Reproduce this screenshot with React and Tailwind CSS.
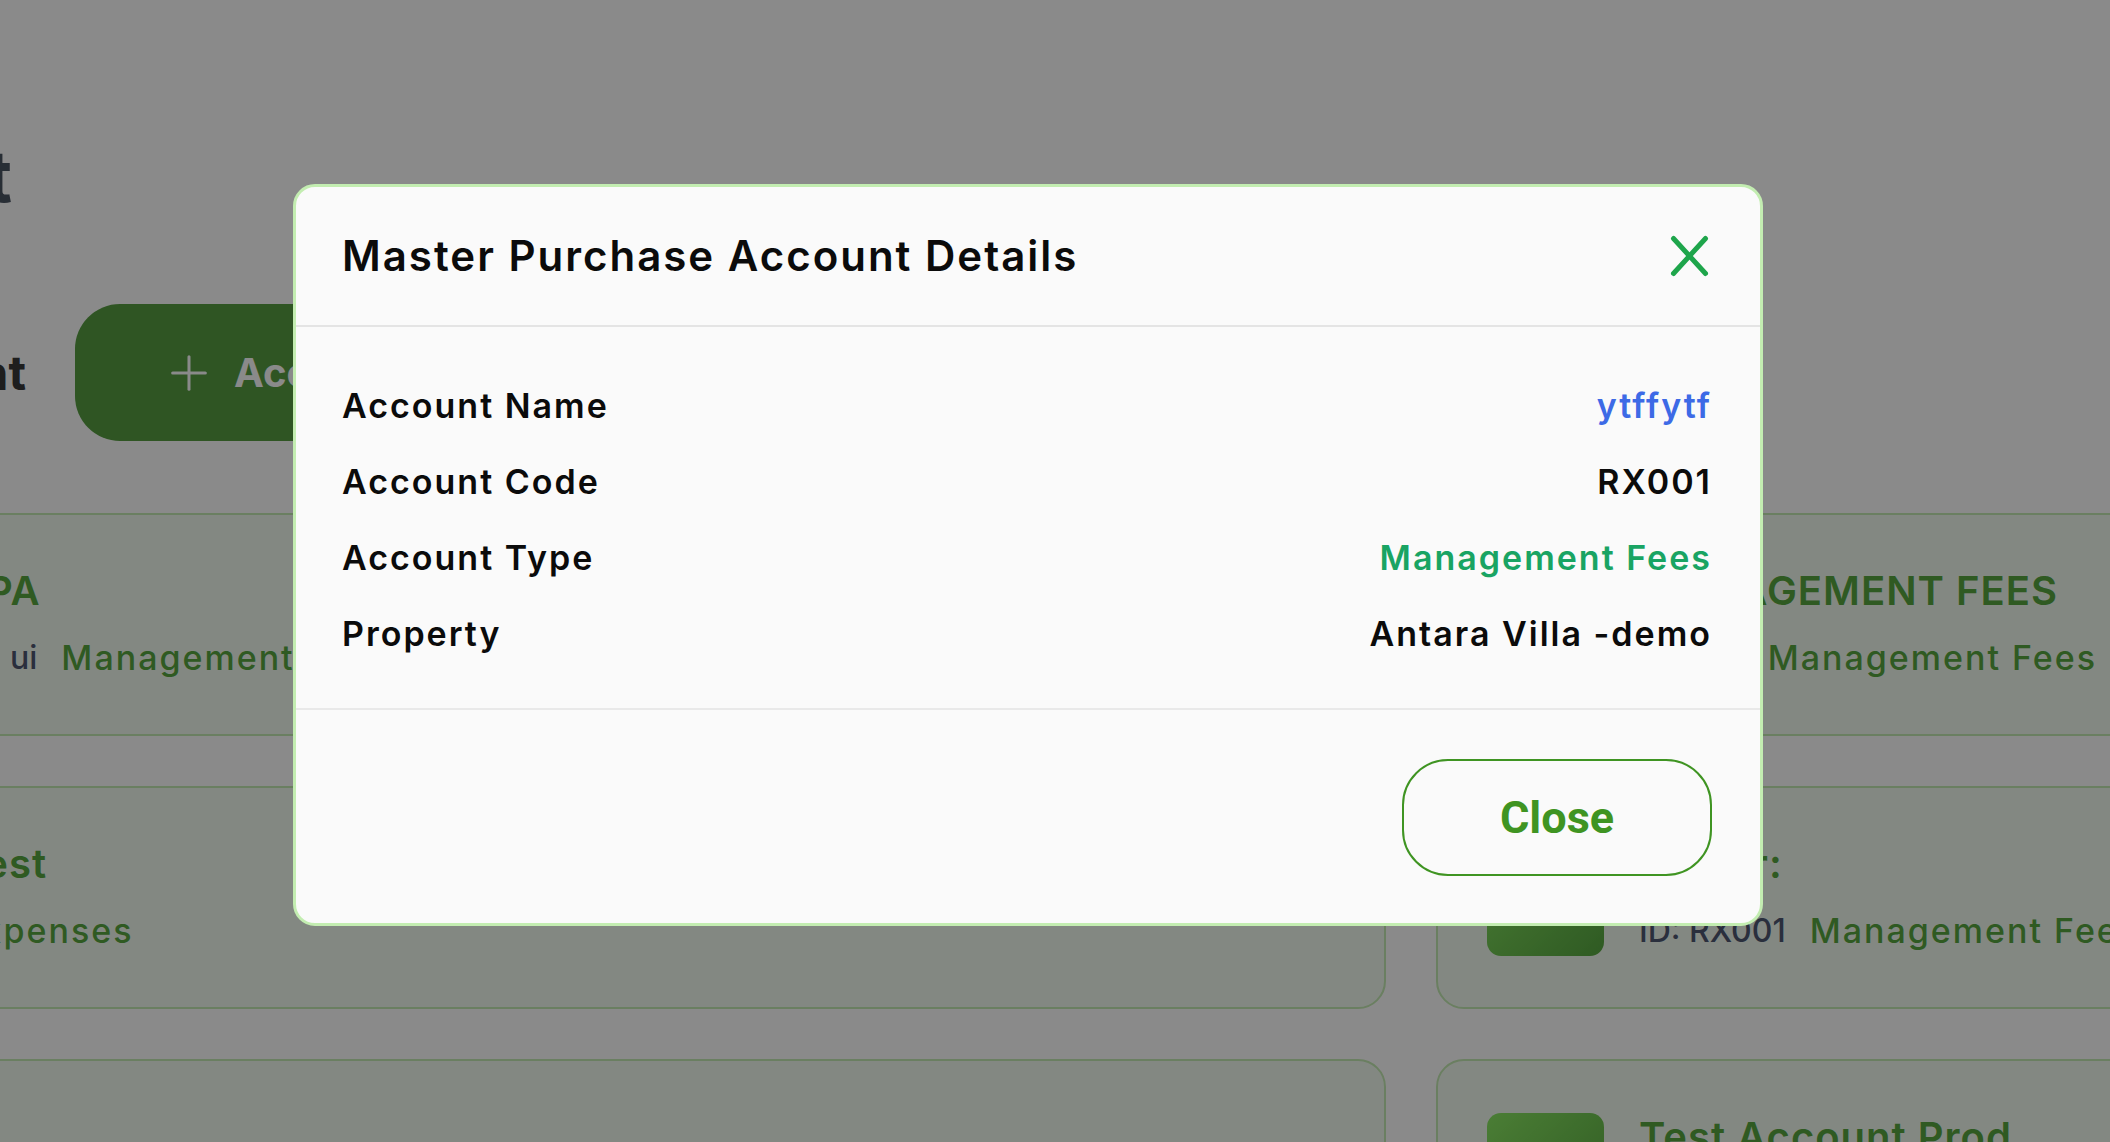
import React from 'react';
import { Plus, Landmark } from 'lucide-react';

const accounts = [
  { title: 'SPA', code: 'ID: ui', type: 'Management Fees' },
  { title: 'MANAGEMENT FEES', code: 'ID: 001', type: 'Management Fees' },
  { title: 'Test', code: '', type: 'Expenses' },
  { title: 'Repair:', code: 'ID: RX001', type: 'Management Fees' },
  { title: 'H', code: 'ID: RX002', type: 'Expenses' },
  { title: 'Test Account Prod', code: 'ID: RX003', type: 'Management Fees' },
];

const details = [
  { label: 'Account Name', value: 'ytffytf', color: 'text-[#3d6ae6]' },
  { label: 'Account Code', value: 'RX001', color: 'text-[#0b0b0b]' },
  { label: 'Account Type', value: 'Management Fees', color: 'text-[#19a463]' },
  { label: 'Property', value: 'Antara Villa -demo', color: 'text-[#0b0b0b]' },
];

const AccountCard = ({ account }) => (
  <div className="flex h-[223px] items-center gap-[35px] rounded-[28px] border-2 border-[#c5eab3] bg-[#f3fcf1] pl-[49px]">
    <div className="flex h-[116px] w-[117px] shrink-0 items-center justify-center rounded-[14px] bg-gradient-to-br from-[#8ae862] to-[#57a741]">
      <Landmark className="h-[60px] w-[60px] text-white" strokeWidth={2} />
    </div>
    <div className="flex flex-col gap-[19px] whitespace-nowrap">
      <h3 className="text-[40px] font-semibold leading-[48px] tracking-[1px] text-[#57a73f]">{account.title}</h3>
      <div className="flex items-center gap-[24px] font-medium leading-[48px]">
        {account.code && <span className="text-[32px] text-[#4e5771]">{account.code}</span>}
        <span className="text-[34px] tracking-[2px] text-[#57a73f]">{account.type}</span>
      </div>
    </div>
  </div>
);

export default function App() {
  return (
    <div className="relative h-[1142px] w-[2110px] overflow-hidden bg-white font-['Inter',sans-serif]">
      {/* page behind the dialog */}
      <div className="pt-[140px]">
        <div className="flex w-[12px] justify-end">
          <h1 className="whitespace-nowrap text-[72px] font-bold leading-[72px] text-[#4b5563]">Master Purchase Account</h1>
        </div>

        <div className="mt-[92px] flex items-center gap-[49px]">
          <div className="flex w-[26px] justify-end">
            <span className="whitespace-nowrap text-[48px] font-bold leading-[58px] text-[#383838]">Total Account</span>
          </div>
          <button className="flex h-[137px] items-center gap-[17px] rounded-[45px] bg-[#579d41] pl-[86px] pr-[90px] text-[40px] font-bold text-white">
            <Plus className="h-[56px] w-[56px]" strokeWidth={1.3} />
            Account
          </button>
        </div>

        <div className="-ml-[243px] mt-[72px] grid w-max grid-cols-[1629px_1612px] gap-[50px]">
          {accounts.map((a) => (
            <AccountCard key={a.title} account={a} />
          ))}
        </div>
      </div>

      {/* dialog */}
      <div className="absolute inset-0 bg-black/[0.46] pl-[293px] pt-[184px]">
        <div className="w-[1470px] rounded-[22px] border-[3px] border-[#c3edb1] bg-[#fafafa]">
          <div className="flex items-center justify-between border-b-2 border-[#e4e4e4] py-[39px] pl-[46px] pr-[51px]">
            <h2 className="text-[42px] font-semibold leading-[60px] tracking-[2px] text-[#0b0b0b]">Master Purchase Account Details</h2>
            <button aria-label="close">
              <svg width="39" height="42" viewBox="0 0 39 42" fill="none" stroke="#1ea54b" strokeWidth="5" strokeLinecap="round">
                <path d="M3.5 3.5L35.5 38.5" />
                <path d="M35.5 3.5L3.5 38.5" />
              </svg>
            </button>
          </div>

          <div className="flex flex-col gap-[28px] pb-[50px] pl-[46px] pr-[48px] pt-[55px]">
            {details.map((d) => (
              <div key={d.label} className="flex items-center justify-between text-[34px] font-semibold leading-[48px] tracking-[2px]">
                <span className="text-[#0b0b0b]">{d.label}</span>
                <span className={d.color}>{d.value}</span>
              </div>
            ))}
          </div>

          <div className="flex justify-end border-t-2 border-[#e9e9e9] pb-[47px] pr-[48px] pt-[49px]">
            <button className="h-[117px] w-[310px] rounded-[46px] border-2 border-[#3f9422] font-['Roboto',sans-serif] text-[45px] font-bold text-[#3f9422]">
              Close
            </button>
          </div>
        </div>
      </div>
    </div>
  );
}
